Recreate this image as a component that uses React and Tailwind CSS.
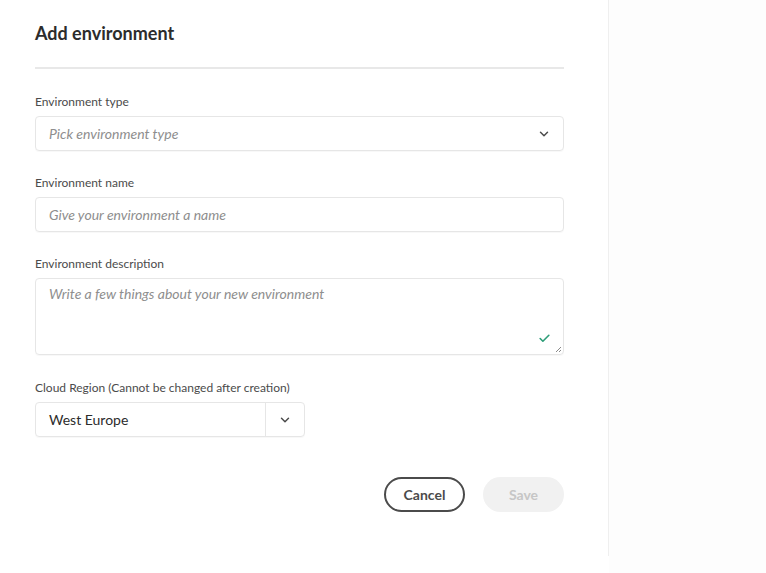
import { ChevronDown, Check } from 'lucide-react';

const Label = ({ children }) => (
  <div className="text-[12px] leading-[16px] text-[#4b4b4b] mb-[6px]">{children}</div>
);

const App = () => {
  return (
    <div className="min-h-[573px] w-[766px] bg-white flex" style={{ fontFamily: 'Lato, "Open Sans", sans-serif' }}>
      <div className="w-[609px] h-[556px] bg-white border-r border-[#efefef] pl-[35px] pr-[44px] pt-[22px]">
        <h1 className="text-[18px] leading-[22px] font-bold text-[#2c2c2c]">Add environment</h1>
        <div className="mt-[23px] h-[2px] bg-[#e8e8e8]" />

        <div className="mt-[25px]">
          <Label>Environment type</Label>
          <div className="h-[35px] border border-[#e6e6e6] rounded-[4px] shadow-[0_1px_1px_rgba(0,0,0,0.03)] flex items-center pl-[13px] pr-[12px] justify-between">
            <span className="italic text-[14px] text-[#8e8e8e]">Pick environment type</span>
            <ChevronDown className="w-[14px] h-[14px] text-[#4b4b4b]" strokeWidth={2.5} />
          </div>
        </div>

        <div className="mt-[24px]">
          <Label>Environment name</Label>
          <div className="h-[35px] border border-[#e6e6e6] rounded-[4px] shadow-[0_1px_1px_rgba(0,0,0,0.03)] flex items-center pl-[13px]">
            <span className="italic text-[14px] text-[#8e8e8e]">Give your environment a name</span>
          </div>
        </div>

        <div className="mt-[24px]">
          <Label>Environment description</Label>
          <div className="relative h-[77px] border border-[#e6e6e6] rounded-[4px] shadow-[0_1px_1px_rgba(0,0,0,0.03)] pl-[13px] pt-[2px]">
            <span className="italic text-[14px] text-[#8e8e8e]">Write a few things about your new environment</span>
            <Check className="absolute right-[12px] bottom-[9px] w-[13px] h-[13px] text-[#2d9d78]" strokeWidth={3} />
            <svg className="absolute right-[1px] bottom-[1px]" width="8" height="8" viewBox="0 0 8 8">
              <path d="M7 2 L2 7 M7 5 L5 7" stroke="#8a8a8a" strokeWidth="1" />
            </svg>
          </div>
        </div>

        <div className="mt-[25px]">
          <Label>Cloud Region (Cannot be changed after creation)</Label>
          <div className="w-[270px] h-[35px] border border-[#e6e6e6] rounded-[4px] shadow-[0_1px_1px_rgba(0,0,0,0.03)] flex">
            <div className="flex-1 flex items-center pl-[13px] text-[14px] text-[#2c2c2c]">West Europe</div>
            <div className="w-[39px] border-l border-[#e6e6e6] flex items-center justify-center">
              <ChevronDown className="w-[14px] h-[14px] text-[#4b4b4b]" strokeWidth={2.5} />
            </div>
          </div>
        </div>

        <div className="mt-[40px] flex justify-end gap-[18px]">
          <button className="w-[81px] h-[35px] rounded-full border-2 border-[#4b4b4b] text-[14px] font-bold text-[#4b4b4b]">Cancel</button>
          <button className="w-[81px] h-[35px] rounded-full bg-[#f1f1f1] text-[14px] font-bold text-[#c6c6c6]">Save</button>
        </div>
      </div>
      <div className="flex-1 bg-[#fdfdfd]" />
    </div>
  );
};

export default App;
